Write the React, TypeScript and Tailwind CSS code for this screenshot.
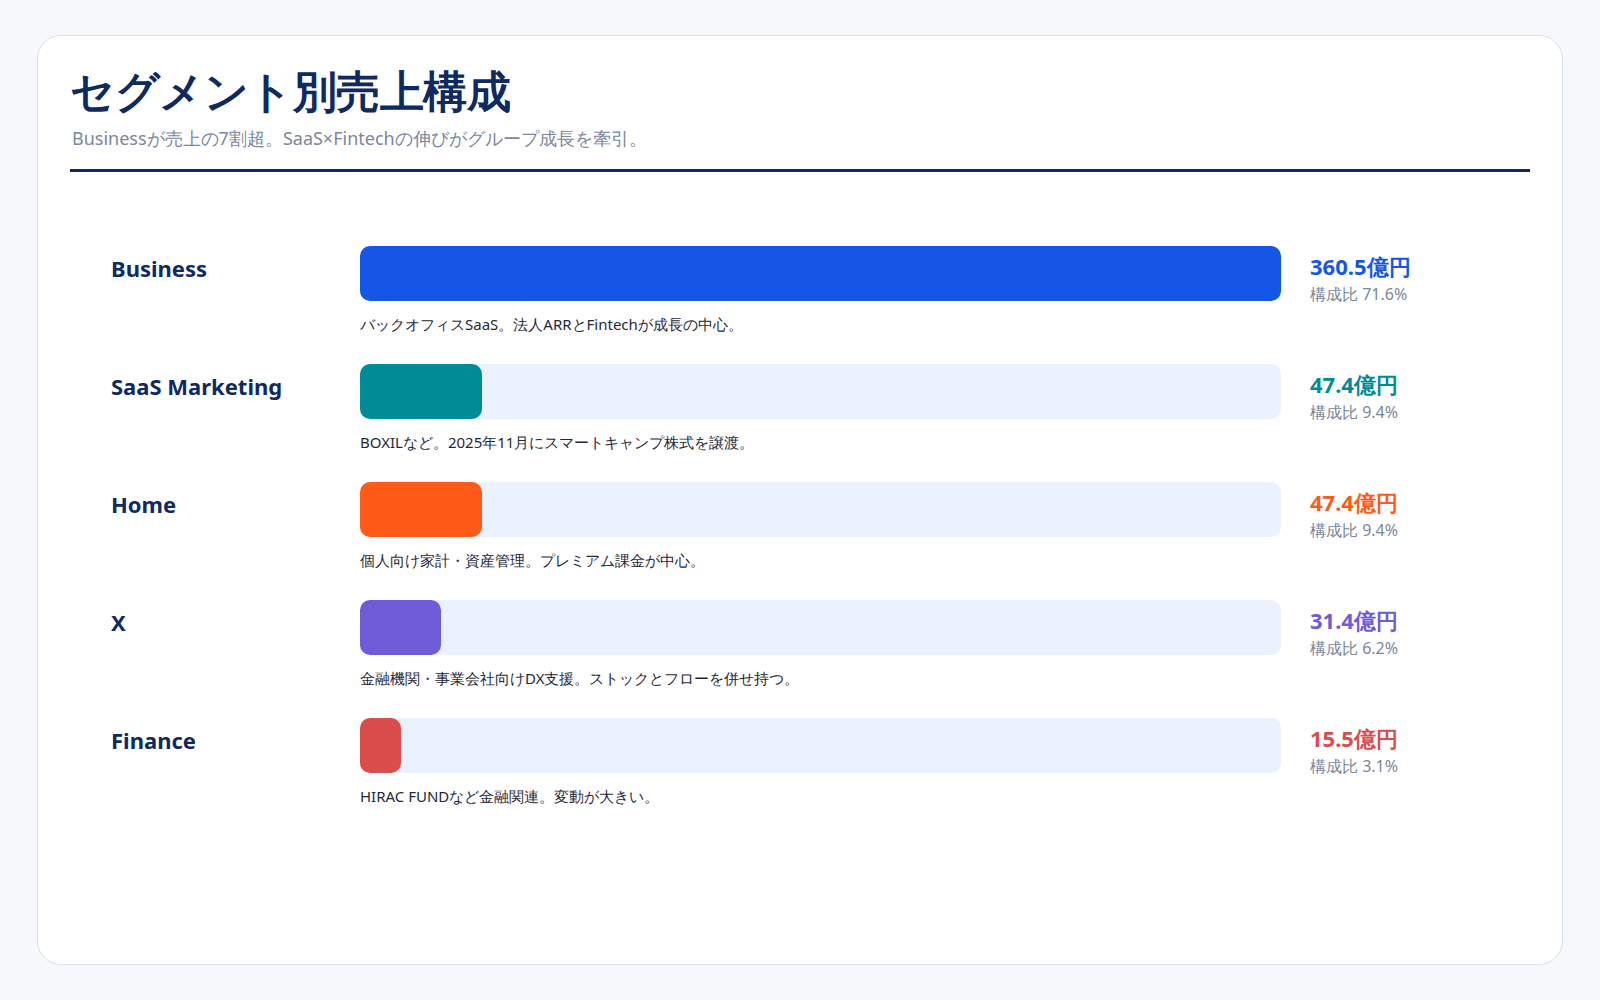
const rows = [
  { name: "Business", pct: 100, color: "bg-[#1656e6]", text: "text-[#1656e6]", value: "360.5億円", share: "71.6%", desc: "バックオフィスSaaS。法人ARRとFintechが成長の中心。" },
  { name: "SaaS Marketing", pct: 13.2, color: "bg-[#008c94]", text: "text-[#008c94]", value: "47.4億円", share: "9.4%", desc: "BOXILなど。2025年11月にスマートキャンプ株式を譲渡。" },
  { name: "Home", pct: 13.2, color: "bg-[#ff5a17]", text: "text-[#ff5a17]", value: "47.4億円", share: "9.4%", desc: "個人向け家計・資産管理。プレミアム課金が中心。" },
  { name: "X", pct: 8.8, color: "bg-[#6f5ad8]", text: "text-[#6f5ad8]", value: "31.4億円", share: "6.2%", desc: "金融機関・事業会社向けDX支援。ストックとフローを併せ持つ。" },
  { name: "Finance", pct: 4.4, color: "bg-[#d94d4d]", text: "text-[#d94d4d]", value: "15.5億円", share: "3.1%", desc: "HIRAC FUNDなど金融関連。変動が大きい。" },
]

export default function App() {
  return (
    <div className="w-[1600px] h-[1000px] bg-[#f6f8fb] p-[35px_37px] font-['DejaVu_Sans','Noto_Sans_CJK_JP',sans-serif]">
      <div className="h-[930px] bg-white border border-[#d6e0ee] rounded-[24px] px-[32px] pt-[22px]">
        <h1 className="text-[44px] font-bold text-[#0f2a5f] leading-[64px] tracking-[-0.5px]">セグメント別売上構成</h1>
        <p className="text-[18px] text-[#7a879c] mt-[2px] ml-[2px] leading-[28px]">Businessが売上の7割超。SaaS×Fintechの伸びがグループ成長を牽引。</p>
        <div className="h-[3px] bg-[#0f2a5f] mt-[17px]" />
        <div className="mt-[74px] flex flex-col gap-[29px]">
          {rows.map((r) => (
            <div key={r.name} className="flex">
              <div className="w-[290px] pl-[41px] pt-[6px] text-[22px] font-bold text-[#0f2a5f] leading-[32px]">{r.name}</div>
              <div className="w-[921px]">
                <div className="h-[55px] rounded-[10px] bg-[#ebf2ff]">
                  <div className={`h-full rounded-[10px] ${r.color}`} style={{ width: `${r.pct}%` }} />
                </div>
                <div className="text-[15px] text-[#1f2937] mt-[12px] leading-[22px]">{r.desc}</div>
              </div>
              <div className="pl-[29px]">
                <div className={`text-[22px] font-bold leading-[32px] pt-[4px] ${r.text}`}>{r.value}</div>
                <div className="text-[16px] text-[#7a879c] leading-[24px]">構成比 {r.share}</div>
              </div>
            </div>
          ))}
        </div>
      </div>
    </div>
  )
}
